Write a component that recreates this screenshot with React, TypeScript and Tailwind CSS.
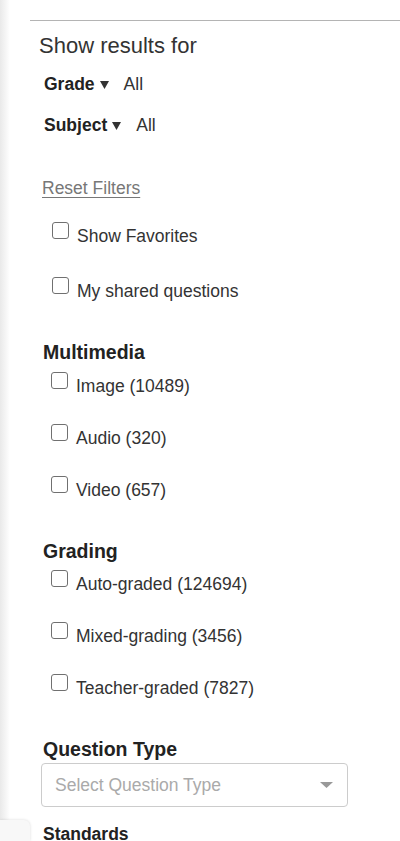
import React from 'react'

// Sidebar filter panel for a question bank search page

const Caret = () => (
  <svg width="9" height="8" viewBox="0 0 9 8" className="ml-[5px] mt-[2px] shrink-0">
    <polygon points="0,0 9,0 4.5,8" fill="#333" />
  </svg>
)

function Box() {
  return <span className="block w-[17px] h-[17px] shrink-0 rounded-[3px] border border-[#707070] bg-white" />
}

function Check({ label, className = '' }: { label: string; className?: string }) {
  return (
    <div className={`flex items-start ${className}`}>
      <Box />
      <span className="ml-[8px] mt-[2px] leading-[24px] text-[17.5px] text-[#333]">{label}</span>
    </div>
  )
}

function Dropdown({ name, className = '' }: { name: string; className?: string }) {
  return (
    <div className={`flex items-center h-[24px] pl-[14px] text-[17.5px] ${className}`}>
      <span className="font-bold text-[#222]">{name}</span>
      <Caret />
      <span className="ml-[15px] text-[#333]">All</span>
    </div>
  )
}

export default function App() {
  const multimedia = ['Image (10489)', 'Audio (320)', 'Video (657)']
  const grading = ['Auto-graded (124694)', 'Mixed-grading (3456)', 'Teacher-graded (7827)']

  return (
    <div className="relative flex w-[400px] h-[841px] overflow-hidden bg-white font-['Liberation_Sans',Arial,sans-serif] text-[#333]">
      {/* shadow cast by the panel on the left */}
      <div className="w-[10px] shrink-0 bg-gradient-to-r from-[#e9e9e9] to-white" />

      <div className="flex-1 pl-[20px] pt-[20px]">
        <div className="h-px bg-[#b4b4b4]" />

        <div className="mt-[12px] pl-[9px] h-[26px] leading-[26px] text-[22px]">Show results for</div>

        <Dropdown name="Grade" className="mt-[13px]" />
        <Dropdown name="Subject" className="mt-[17px]" />

        <div className="mt-[39px] pl-[12px] h-[24px] leading-[24px] text-[17.5px]">
          <a className="text-[#777] underline underline-offset-[3px]">Reset Filters</a>
        </div>

        <div className="pl-[22px]">
          <Check label="Show Favorites" className="mt-[22px]" />
          <Check label="My shared questions" className="mt-[29px]" />
        </div>

        <div className="mt-[36px] pl-[13px] h-[26px] leading-[26px] text-[19.5px] font-bold text-[#222]">Multimedia</div>
        <div className="pl-[21px]">
          {multimedia.map((m, i) => (
            <Check key={m} label={m} className={i === 0 ? 'mt-[7px]' : 'mt-[26px]'} />
          ))}
        </div>

        <div className="mt-[36px] pl-[13px] h-[26px] leading-[26px] text-[19.5px] font-bold text-[#222]">Grading</div>
        <div className="pl-[21px]">
          {grading.map((g, i) => (
            <Check key={g} label={g} className={i === 0 ? 'mt-[6px]' : 'mt-[26px]'} />
          ))}
        </div>

        <div className="mt-[36px] pl-[13px] h-[26px] leading-[26px] text-[19.5px] font-bold text-[#222]">Question Type</div>
        <div className="mt-[1px] ml-[11px] w-[307px] h-[44px] flex items-center justify-between rounded-[4px] border border-[#ccc] pl-[13px] pr-[14px]">
          <span className="text-[17.5px] text-[#aaa]">Select Question Type</span>
          <svg width="13" height="6" viewBox="0 0 13 6">
            <polygon points="0,0 13,0 6.5,6" fill="#999" />
          </svg>
        </div>

        <div className="mt-[15px] pl-[13px] h-[24px] leading-[24px] text-[17.5px] font-bold text-[#222]">Standards</div>
      </div>

      {/* floating tab peeking in at the lower left */}
      <div className="absolute left-0 bottom-0 w-[30px] h-[21px] rounded-tr-[6px] bg-[#f8f8f8] shadow-[0_0_3px_rgba(0,0,0,0.15)]" />
    </div>
  )
}
